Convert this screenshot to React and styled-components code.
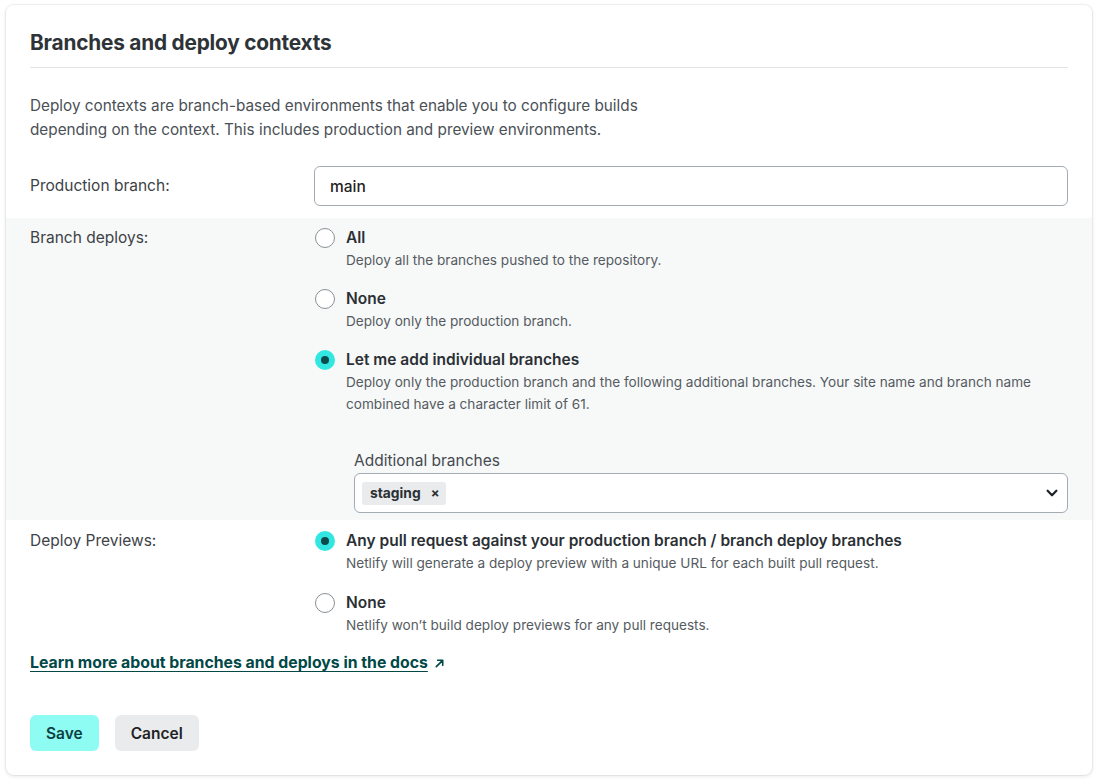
import React from 'react';
import styled, { createGlobalStyle, css } from 'styled-components';

const GlobalStyle = createGlobalStyle`
  html, body {
    margin: 0;
    background: #ffffff;
    font-family: Inter, "Noto Sans", "Liberation Sans", sans-serif;
    -webkit-font-smoothing: antialiased;
  }
`;

const Page = styled.div`
  padding: 5px 6px;
`;

const Card = styled.section`
  width: 1086px;
  background: #fff;
  border-radius: 8px;
  box-shadow: 0 0 0 1px rgba(0, 0, 0, 0.04), 0 1px 4px rgba(0, 0, 0, 0.12);
  padding-bottom: 24px;
`;

const Header = styled.header`
  margin: 0 24px;
  padding: 24px 0 10px;
  border-bottom: 1px solid #e2e4e6;
`;

const Title = styled.h2`
  margin: 0;
  font-size: 20.8px;
  line-height: 28px;
  font-weight: 700;
  color: #2e3338;
  letter-spacing: -0.2px;
`;

const Intro = styled.p`
  margin: 26px 24px 12px;
  max-width: 650px;
  font-size: 15.3px;
  line-height: 24px;
  color: #4a5056;
`;

const Row = styled.div`
  display: grid;
  grid-template-columns: 260px 1fr;
  column-gap: 24px;
  padding: ${p => p.pad || '12px 24px'};
  background: ${p => (p.shaded ? '#f7f8f8' : 'transparent')};
`;

const Label = styled.div`
  font-size: 15.5px;
  line-height: 24px;
  color: #3d4247;
  padding-top: ${p => p.top || '0'};
`;

const field = css`
  box-sizing: border-box;
  border: 1px solid #a3abb3;
  border-radius: 6px;
  background: #fff;
  height: 40px;
`;

const TextInput = styled.div`
  ${field};
  display: flex;
  align-items: center;
  padding: 1px 15px 0;
  font-size: 15.5px;
  font-weight: 500;
  color: #1f2326;
`;

const Options = styled.div`
  display: flex;
  flex-direction: column;
  gap: ${p => p.gap || '16px'};
`;

const Option = styled.div`
  display: grid;
  grid-template-columns: 20px 1fr;
  column-gap: 11px;
  padding-left: 1px;
`;

const Radio = styled.span`
  box-sizing: border-box;
  width: 20px;
  height: 20px;
  margin-top: 2px;
  border-radius: 50%;
  display: flex;
  align-items: center;
  justify-content: center;
  ${p =>
    p.checked
      ? css`
          background: #32e6e2;
          &::after {
            content: '';
            width: 8px;
            height: 8px;
            border-radius: 50%;
            background: #0c4a4c;
          }
        `
      : css`
          background: #fff;
          border: 1px solid #8a9096;
        `}
`;

const OptionTitle = styled.div`
  font-size: 15.5px;
  line-height: 24px;
  font-weight: 600;
  color: #2b3035;
`;

const OptionDesc = styled.div`
  margin-top: -1px;
  font-size: 13.6px;
  line-height: 22px;
  color: #555b61;
  grid-column: 2;
`;

const SubField = styled.div`
  grid-column: 2;
  margin: 34px 0 0 8px;
`;

const SubLabel = styled.div`
  font-size: 15.5px;
  line-height: 24px;
  color: #444a50;
`;

const Select = styled.div`
  ${field};
  display: flex;
  align-items: center;
  justify-content: space-between;
  padding: 0 8px 0 7px;
`;

const Tag = styled.span`
  display: inline-flex;
  align-items: center;
  gap: 10px;
  height: 23px;
  padding: 0 7px 0 8px;
  border-radius: 3px;
  background: #e9ebed;
  font-size: 13.8px;
  font-weight: 700;
  color: #2b3035;
`;

const TagX = styled.span`
  font-size: 13px;
  font-weight: 700;
`;

const DocLink = styled.a`
  display: inline-flex;
  align-items: center;
  gap: 6px;
  margin: 15px 24px 0;
  font-size: 15.8px;
  line-height: 24px;
  font-weight: 700;
  color: #014847;
  text-decoration: underline;
  text-underline-offset: 3px;
  text-decoration-thickness: 1px;
  svg {
    flex: none;
  }
`;

const Actions = styled.div`
  display: flex;
  gap: 16px;
  margin: 40px 24px 0;
`;

const Button = styled.button`
  height: 36px;
  padding: 0 16px;
  border: none;
  border-radius: 6px;
  font-family: inherit;
  font-size: 15.5px;
  font-weight: 600;
  background: ${p => (p.primary ? '#8ffcf4' : '#e9ebed')};
  color: ${p => (p.primary ? '#0c3f41' : '#1f2326')};
`;

const Chevron = () => (
  <svg width="14" height="14" viewBox="0 0 16 16" fill="none">
    <path d="M3 5.5 8 10.5 13 5.5" stroke="#1f2326" strokeWidth="2.6" strokeLinecap="round" strokeLinejoin="round" />
  </svg>
);

const ArrowUpRight = () => (
  <svg width="11" height="11" viewBox="0 0 12 12" fill="none">
    <path d="M2.5 9.5 9.5 2.5M4 2.5h5.5V8" stroke="#014847" strokeWidth="1.8" strokeLinecap="round" strokeLinejoin="round" />
  </svg>
);

const RadioOption = ({ checked, title, children }) => (
  <Option>
    <Radio checked={checked} />
    <OptionTitle>{title}</OptionTitle>
    <OptionDesc>{children}</OptionDesc>
  </Option>
);

export default function App() {
  return (
    <Page>
      <GlobalStyle />
      <Card>
        <Header>
          <Title>Branches and deploy contexts</Title>
        </Header>
        <Intro>
          Deploy contexts are branch-based environments that enable you to configure builds depending on the
          context. This includes production and preview environments.
        </Intro>

        <Row>
          <Label top="8px">Production branch:</Label>
          <TextInput>main</TextInput>
        </Row>

        <Row shaded pad="8px 24px 7px">
          <Label>Branch deploys:</Label>
          <Options>
            <RadioOption title="All">Deploy all the branches pushed to the repository.</RadioOption>
            <RadioOption title="None">Deploy only the production branch.</RadioOption>
            <Option>
              <Radio checked />
              <OptionTitle>Let me add individual branches</OptionTitle>
              <OptionDesc>
                Deploy only the production branch and the following additional branches. Your site name and branch
                name combined have a character limit of 61.
              </OptionDesc>
              <SubField>
                <SubLabel>Additional branches</SubLabel>
                <Select>
                  <Tag>
                    staging <TagX>×</TagX>
                  </Tag>
                  <Chevron />
                </Select>
              </SubField>
            </Option>
          </Options>
        </Row>

        <Row pad="9px 24px 0">
          <Label>Deploy Previews:</Label>
          <Options gap="17px">
            <RadioOption checked title="Any pull request against your production branch / branch deploy branches">
              Netlify will generate a deploy preview with a unique URL for each built pull request.
            </RadioOption>
            <RadioOption title="None">Netlify won’t build deploy previews for any pull requests.</RadioOption>
          </Options>
        </Row>

        <DocLink href="#">
          Learn more about branches and deploys in the docs
          <ArrowUpRight />
        </DocLink>

        <Actions>
          <Button primary>Save</Button>
          <Button>Cancel</Button>
        </Actions>
      </Card>
    </Page>
  );
}
